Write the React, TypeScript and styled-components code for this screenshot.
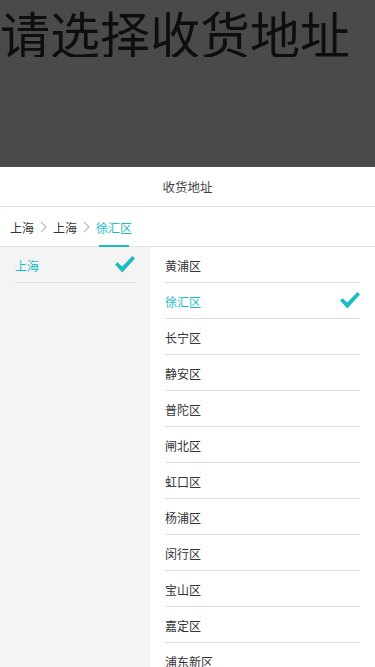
import React, { useState } from "react";
import styled, { createGlobalStyle } from "styled-components";

const TEAL = "#1cbcc7";

const Global = createGlobalStyle`
  html, body { margin: 0; padding: 0; background: #fff; }
  body { font-family: "Noto Sans CJK SC", "Noto Sans", sans-serif; }
  * { box-sizing: border-box; }
`;

const PageTitle = styled.h1`
  margin: 0;
  padding-top: 7px;
  font-size: 50px;
  line-height: 50px;
  font-weight: 400;
  color: #333;
  white-space: nowrap;
`;

const Mask = styled.div`
  position: fixed;
  inset: 0;
  background: rgba(0, 0, 0, 0.71);
`;

const Sheet = styled.div`
  position: fixed;
  left: 0;
  right: 0;
  bottom: 0;
  height: 500px;
  background: #fff;
  display: flex;
  flex-direction: column;
`;

const Header = styled.div`
  height: 40px;
  flex: none;
  display: flex;
  align-items: center;
  justify-content: center;
  border-bottom: 1px solid #e2e2e2;
  font-size: 12.5px;
  color: #444;
`;

const TabBar = styled.div`
  height: 40px;
  flex: none;
  display: flex;
  align-items: center;
  padding-left: 10px;
  gap: 6px;
  border-bottom: 1px solid #e2e2e2;
`;

const Tab = styled.div<{ $active?: boolean }>`
  position: relative;
  height: 100%;
  display: flex;
  align-items: center;
  padding-top: 1px;
  font-size: 12px;
  color: ${(p) => (p.$active ? TEAL : "#333")};
  &::after {
    content: "";
    display: ${(p) => (p.$active ? "block" : "none")};
    position: absolute;
    left: 50%;
    bottom: -1px;
    width: 30px;
    height: 2px;
    margin-left: -15px;
    background: ${TEAL};
  }
`;

const Body = styled.div`
  flex: 1;
  display: flex;
  min-height: 0;
  overflow: hidden;
`;

const LeftCol = styled.div`
  width: 150px;
  flex: none;
  background: #f4f4f4;
  padding: 0 15px;
`;

const RightCol = styled.div`
  flex: 1;
  padding: 0 15px;
  background: #fff;
`;

const Row = styled.div<{ $active?: boolean }>`
  height: 36px;
  display: flex;
  align-items: center;
  justify-content: space-between;
  padding-top: 2px;
  border-bottom: 1px solid #dedede;
  font-size: 12px;
  color: ${(p) => (p.$active ? TEAL : "#333")};
`;

const Check = () => (
  <svg width="20" height="17" viewBox="0 0 20 17" style={{ marginTop: -2 }}>
    <path d="M0 8.6 L2.6 6.2 L7.2 10.4 L17.4 0 L20 2.5 L7.3 16.6 Z" fill={TEAL} />
  </svg>
);

const Chevron = () => (
  <svg width="7" height="12" viewBox="0 0 7 12">
    <path d="M1 0.8 L6 6 L1 11.2" fill="none" stroke="#b8b8b8" strokeWidth="1.2" />
  </svg>
);

const districts = [
  "黄浦区",
  "徐汇区",
  "长宁区",
  "静安区",
  "普陀区",
  "闸北区",
  "虹口区",
  "杨浦区",
  "闵行区",
  "宝山区",
  "嘉定区",
  "浦东新区",
];

export default function App() {
  const [selected, setSelected] = useState("徐汇区");
  return (
    <>
      <Global />
      <PageTitle>请选择收货地址</PageTitle>
      <Mask />
      <Sheet>
        <Header>收货地址</Header>
        <TabBar>
          <Tab>上海</Tab>
          <Chevron />
          <Tab>上海</Tab>
          <Chevron />
          <Tab $active>{selected}</Tab>
        </TabBar>
        <Body>
          <LeftCol>
            <Row $active>
              上海
              <Check />
            </Row>
          </LeftCol>
          <RightCol>
            {districts.map((d) => (
              <Row key={d} $active={d === selected} onClick={() => setSelected(d)}>
                {d}
                {d === selected && <Check />}
              </Row>
            ))}
          </RightCol>
        </Body>
      </Sheet>
    </>
  );
}
